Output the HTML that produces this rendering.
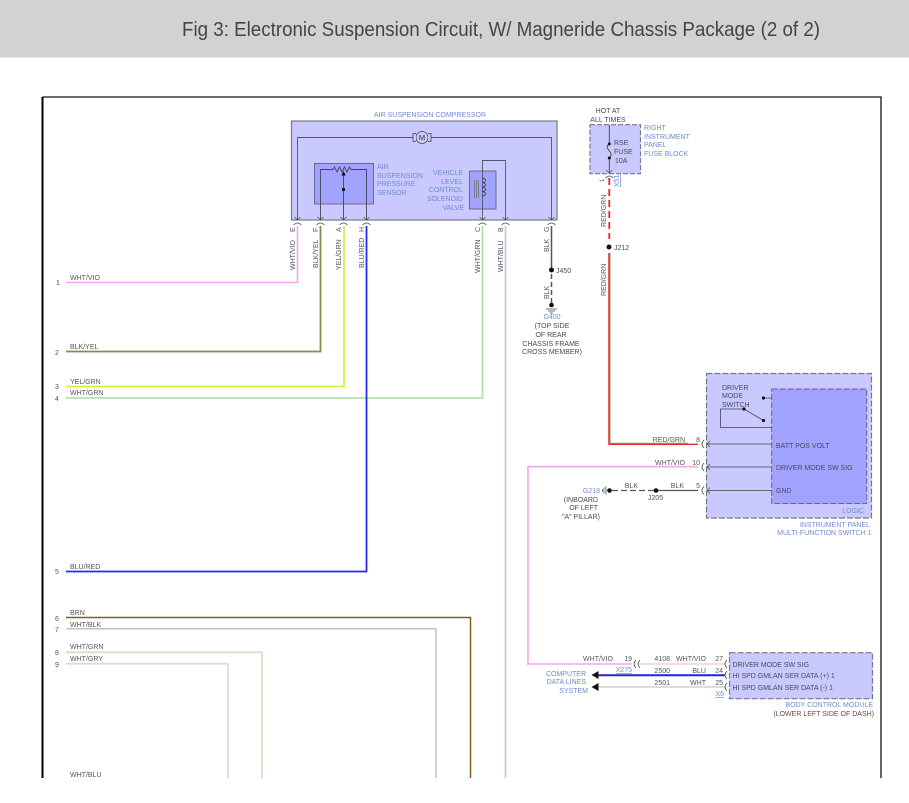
<!DOCTYPE html>
<html><head><meta charset="utf-8">
<style>
html,body{margin:0;padding:0;background:#fff;width:909px;height:803px;overflow:hidden}
svg{display:block}
text{font-family:"Liberation Sans",sans-serif;font-size:7px;fill:#555}
.b{fill:#6f8ccf}
.d{fill:#4a4a5a}
.e{text-anchor:end}
.m{text-anchor:middle}
.all{filter:blur(.3px)}
</style></head><body>
<svg width="909" height="803" viewBox="0 0 909 803" xmlns="http://www.w3.org/2000/svg">
<rect width="909" height="803" fill="#fff"/>
<rect width="909" height="57.5" fill="#d2d2d2"/>
<text x="182" y="36" style="font-size:20px;fill:#444" textLength="638" lengthAdjust="spacingAndGlyphs">Fig 3: Electronic Suspension Circuit, W/ Magneride Chassis Package (2 of 2)</text>

<g class="all">
<!-- frame -->
<path d="M881 778V97H42.500" fill="none" stroke="#111" stroke-width="1.300"/>
<path d="M42.500 97V778" fill="none" stroke="#000" stroke-width="2"/>

<!-- compressor -->
<rect x="291.500" y="121" width="265.500" height="99" fill="#c9c9ff" stroke="#77778a" stroke-width="1.200"/>
<path d="M297.500 220V137.500H413M431 137.500H551.500V220" fill="none" stroke="#555566" stroke-width=".9"/>
<circle cx="422" cy="137.500" r="6" fill="#c9c9ff" stroke="#444" stroke-width=".8"/>
<path d="M416 133.500h-3v8h3M428 133.500h3v8h-3" fill="#c9c9ff" stroke="#444" stroke-width=".8"/>
<text x="422" y="140" class="m" style="font-size:7.5px;fill:#333">M</text>
<rect x="314.500" y="163.500" width="59" height="40.500" fill="#a2a2ff" stroke="#6a6a8a" stroke-width="1"/>
<path d="M320.500 220V169.500H333l1.500-2.500 2.500 5 2.500-5 2.500 5 2.500-5 2.500 5 2.500-5 1.500 2.500H366.500V220M343.500 174V220" fill="none" stroke="#444455" stroke-width=".9"/>
<path d="M343.500 171l2.200 4.500h-4.400z" fill="#111"/>
<rect x="342" y="188" width="3" height="3" fill="#111"/>
<rect x="469.500" y="171" width="26.500" height="38" fill="#a2a2ff" stroke="#6a6a8a" stroke-width="1"/>
<path d="M482.500 220V160.500H505.500V220" fill="none" stroke="#555566" stroke-width=".9"/>
<path d="M482.500 178c4 1 4 4 0 4.500c4 1 4 4 0 4.500c4 1 4 4 0 4.500c4 1 4 4 0 4.500" fill="none" stroke="#333" stroke-width=".8"/>
<path d="M474.500 180v18M476.500 180v18M478.500 180v18" stroke="#666" stroke-width=".7"/>
<text x="430" y="117" class="b m" style="font-size:7px">AIR SUSPENSION COMPRESSOR</text>
<text x="377" y="169" class="b">AIR</text><text x="377" y="178" class="b">SUSPENSION</text><text x="377" y="186" class="b">PRESSURE</text><text x="377" y="195" class="b">SENSOR</text>
<text x="463" y="175" class="b e">VEHICLE</text><text x="463" y="184" class="b e">LEVEL</text><text x="463" y="192" class="b e">CONTROL</text><text x="463" y="201" class="b e">SOLENOID</text><text x="464" y="210" class="b e">VALVE</text>

<!-- wires left -->
<path d="M66 282.500H297.500V226" fill="none" stroke="#f5a6ee" stroke-width="1.600"/>
<path d="M66 351.500H320.500V226" fill="none" stroke="#8a8a50" stroke-width="1.800"/>
<path d="M66 386.500H344V226" fill="none" stroke="#dcef3e" stroke-width="1.800"/>
<path d="M66 398H482.500V226" fill="none" stroke="#b8dfae" stroke-width="1.800"/>
<path d="M66 571.500H366.500V226" fill="none" stroke="#2a2aee" stroke-width="1.800"/>
<path d="M505.500 226V778" fill="none" stroke="#c5c5ee" stroke-width="1.800"/>
<path d="M66 617.500H470.500V778" fill="none" stroke="#80601c" stroke-width="1.500"/>
<path d="M66 628.700H436V778" fill="none" stroke="#c2c2c2" stroke-width="1.500"/>
<path d="M66 652.300H262V778" fill="none" stroke="#cfe2c6" stroke-width="1.800"/>
<path d="M66 663.700H228V778" fill="none" stroke="#dcdcdc" stroke-width="1.800"/>

<!-- compressor pins -->
<g fill="none" stroke="#555" stroke-width=".8">
<path d="M294.500 217l3 3l3-3M293.500 225q4-4 8 0"/>
<path d="M317.500 217l3 3l3-3M316.500 225q4-4 8 0"/>
<path d="M340.500 217l3 3l3-3M339.500 225q4-4 8 0"/>
<path d="M363.500 217l3 3l3-3M362.500 225q4-4 8 0"/>
<path d="M479.500 217l3 3l3-3M478.500 225q4-4 8 0"/>
<path d="M502.500 217l3 3l3-3M501.500 225q4-4 8 0"/>
<path d="M548.500 217l3 3l3-3M547.500 225q4-4 8 0"/>
</g>
<text transform="translate(295,232) rotate(-90)">E</text>
<text transform="translate(318,232) rotate(-90)">F</text>
<text transform="translate(341,232) rotate(-90)">A</text>
<text transform="translate(364,232) rotate(-90)">H</text>
<text transform="translate(480,232) rotate(-90)">C</text>
<text transform="translate(503,232) rotate(-90)">B</text>
<text transform="translate(549,232) rotate(-90)">G</text>
<text transform="translate(295,270) rotate(-90)">WHT/VIO</text>
<text transform="translate(318,268) rotate(-90)">BLK/YEL</text>
<text transform="translate(341,270) rotate(-90)">YEL/GRN</text>
<text transform="translate(364,268) rotate(-90)">BLU/RED</text>
<text transform="translate(480,273) rotate(-90)">WHT/GRN</text>
<text transform="translate(503,272) rotate(-90)">WHT/BLU</text>
<text transform="translate(549,252) rotate(-90)">BLK</text>
<text transform="translate(549,299) rotate(-90)">BLK</text>

<!-- left labels -->
<text x="70" y="280">WHT/VIO</text><text x="56" y="285">1</text>
<text x="70" y="349">BLK/YEL</text><text x="55" y="355">2</text>
<text x="70" y="384">YEL/GRN</text><text x="55" y="389">3</text>
<text x="70" y="395">WHT/GRN</text><text x="55" y="401">4</text>
<text x="70" y="569">BLU/RED</text><text x="55" y="574">5</text>
<text x="70" y="615">BRN</text><text x="55" y="621">6</text>
<text x="70" y="627">WHT/BLK</text><text x="55" y="632">7</text>
<text x="70" y="649">WHT/GRN</text><text x="55" y="655">8</text>
<text x="70" y="661">WHT/GRY</text><text x="55" y="667">9</text>
<text x="70" y="777">WHT/BLU</text>

<!-- G400 -->
<path d="M551.500 226V270" stroke="#555" stroke-width="1.500"/>
<path d="M551.500 274V305" stroke="#555" stroke-width="1.500" stroke-dasharray="5 3"/>
<circle cx="551.500" cy="270" r="2.500" fill="#111"/>
<text x="556" y="273" class="d">J450</text>
<circle cx="551.500" cy="305" r="2.300" fill="#111"/>
<path d="M546 309h11M548 311h7M550 313h3" stroke="#444" stroke-width=".8"/>
<text x="552" y="319" class="b m">G400</text>
<text x="552" y="328" class="m d">(TOP SIDE</text>
<text x="551" y="337" class="m d">OF REAR</text>
<text x="551" y="346" class="m d">CHASSIS FRAME</text>
<text x="552" y="354" class="m d">CROSS MEMBER)</text>

<!-- fuse block -->
<text x="608" y="113" class="m d">HOT AT</text>
<text x="608" y="122" class="m d">ALL TIMES</text>
<rect x="590" y="124.700" width="50.500" height="49" fill="#c9c9ff" stroke="#777788" stroke-width="1.200" stroke-dasharray="5 2"/>
<path d="M609.300 125V144M609.300 158V173" stroke="#444" stroke-width=".9"/>
<path d="M609.300 144c-3 2-3 3 0 7c3 3 2 5 0 7" fill="none" stroke="#333" stroke-width=".8"/>
<circle cx="609.300" cy="144" r="1.500" fill="#111"/><circle cx="609.300" cy="158" r="1.500" fill="#111"/>
<path d="M606.300 170l3 3l3-3M605.300 178q4-4 8 0" fill="none" stroke="#555" stroke-width=".8"/>
<text x="614" y="145" class="d">RSE</text><text x="614" y="154" class="d">FUSE</text><text x="615" y="163" class="d">10A</text>
<text x="644" y="130" class="b">RIGHT</text><text x="644" y="139" class="b">INSTRUMENT</text><text x="644" y="147" class="b">PANEL</text><text x="644" y="156" class="b">FUSE BLOCK</text>
<text transform="translate(604,182) rotate(-90)" style="font-size:6px">1</text>
<text transform="translate(619,187) rotate(-90)" class="b" style="text-decoration:underline">X51</text>
<path d="M609.300 178V239" stroke="#ee1c2c" stroke-width="1.800" stroke-dasharray="7 4"/>
<circle cx="609" cy="247" r="2.500" fill="#111"/>
<text x="614" y="250" class="d">J212</text>
<text transform="translate(606,227) rotate(-90)">RED/GRN</text>
<text transform="translate(606,296) rotate(-90)">RED/GRN</text>
<path d="M608.900 253V444.300H698" fill="none" stroke="#e82a2a" stroke-width="1.300"/>
<path d="M610 253V443.200H688" fill="none" stroke="#6a9c50" stroke-width="1"/>

<!-- instrument panel switch -->
<path d="M528 665V466.700H698" fill="none" stroke="#f3a6ea" stroke-width="1.600"/>
<rect x="706.500" y="373.500" width="165" height="144.500" fill="#c9c9ff" stroke="#777788" stroke-width="1.200" stroke-dasharray="6 2"/>
<rect x="771.700" y="389" width="95" height="114.500" fill="#a2a2ff" stroke="#666688" stroke-width="1" stroke-dasharray="6 2"/>
<path d="M763.500 398H771.700M771.700 427.500H720.500V409H744L763.500 420.500" fill="none" stroke="#444455" stroke-width=".8"/>
<circle cx="763.500" cy="398" r="1.600" fill="#111"/><circle cx="744" cy="409" r="1.600" fill="#111"/><circle cx="763.500" cy="420.500" r="1.600" fill="#111"/>
<text x="722" y="390" class="d">DRIVER</text><text x="722" y="398" class="d">MODE</text><text x="722" y="407" class="d">SWITCH</text>
<path d="M707 444H771.700M707 467H771.700M707 490.500H771.700" stroke="#666677" stroke-width="1"/>
<g fill="none" stroke="#555" stroke-width=".8">
<path d="M710 441l-3 3l3 3M704 440q-4 4 0 8"/>
<path d="M710 464l-3 3l3 3M704 463q-4 4 0 8"/>
<path d="M710 487.500l-3 3l3 3M704 486.500q-4 4 0 8"/>
</g>
<text x="776" y="448" class="d">BATT POS VOLT</text>
<text x="776" y="470" class="d">DRIVER MODE SW SIG</text>
<text x="776" y="493" class="d">GND</text>
<text x="864" y="513" class="b e">LOGIC</text>
<text x="870" y="527" class="b e">INSTRUMENT PANEL</text>
<text x="871.500" y="535" class="b e">MULTI-FUNCTION SWITCH 1</text>
<text x="685" y="442" class="e">RED/GRN</text><text x="700" y="442" class="e">8</text>
<text x="685" y="465" class="e">WHT/VIO</text><text x="700" y="465" class="e">10</text>
<text x="684" y="488" class="e">BLK</text><text x="700" y="488" class="e">5</text>
<text x="638" y="488" class="e">BLK</text>
<path d="M656 490.500H698" stroke="#555" stroke-width="1.300"/>
<path d="M612 490.500H656" stroke="#555" stroke-width="1.300" stroke-dasharray="6 3"/>
<circle cx="656" cy="490.500" r="2.300" fill="#111"/>
<circle cx="609.500" cy="490.500" r="2.300" fill="#111"/>
<path d="M606 486v9M604 487.500v6M602.500 489v3" stroke="#444" stroke-width=".7"/>
<text x="655.500" y="500" class="m d">J205</text>
<text x="600" y="493" class="b e">G218</text>
<text x="598" y="502" class="e d">(INBOARD</text><text x="598" y="510" class="e d">OF LEFT</text><text x="600" y="519" class="e d">"A" PILLAR)</text>

<!-- BCM -->
<path d="M528 664H632" stroke="#f3a6ea" stroke-width="1.600"/>
<path d="M639 664H725" stroke="#eec2ea" stroke-width="1.200"/>
<path d="M597 675.300H725" stroke="#2222dd" stroke-width="2"/>
<path d="M597 687H725" stroke="#dcdcdc" stroke-width="2"/>
<path d="M591.500 675l7-4v8zM591.500 687l7-4v8z" fill="#111"/>
<path d="M636 660q-4 4 0 8M640 660q-4 4 0 8" fill="none" stroke="#555" stroke-width=".8"/>
<rect x="729.500" y="652.700" width="143" height="46" fill="#c9c9ff" stroke="#777788" stroke-width="1.200" stroke-dasharray="6 2"/>
<path d="M727 660q-4 4 0 8M727 671q-4 4 0 8M727 683q-4 4 0 8" fill="none" stroke="#555" stroke-width=".8"/>
<text x="732.500" y="667" class="d">DRIVER MODE SW SIG</text>
<text x="732.500" y="678" class="d">HI SPD GMLAN SER DATA (+) 1</text>
<text x="732.500" y="690" class="d">HI SPD GMLAN SER DATA (-) 1</text>
<text x="873" y="707" class="b e">BODY CONTROL MODULE</text>
<text x="874" y="716" class="e d" style="fill:#6a4a3a">(LOWER LEFT SIDE OF DASH)</text>
<text x="613" y="661" class="e">WHT/VIO</text><text x="632" y="661" class="e">19</text>
<text x="670" y="661" class="e">4108</text><text x="706" y="661" class="e">WHT/VIO</text><text x="723" y="661" class="e">27</text>
<text x="670" y="673" class="e">2500</text><text x="706" y="673" class="e">BLU</text><text x="723" y="673" class="e">24</text>
<text x="670" y="685" class="e">2501</text><text x="706" y="685" class="e">WHT</text><text x="723" y="685" class="e">25</text>
<text x="632" y="672" class="e b" style="text-decoration:underline">X275</text>
<text x="724" y="696" class="e b" style="text-decoration:underline">X6</text>
<text x="586" y="676" class="e b">COMPUTER</text>
<text x="586" y="684" class="e b">DATA LINES</text>
<text x="588" y="693" class="e b">SYSTEM</text>
</g>
</svg>
</body></html>
